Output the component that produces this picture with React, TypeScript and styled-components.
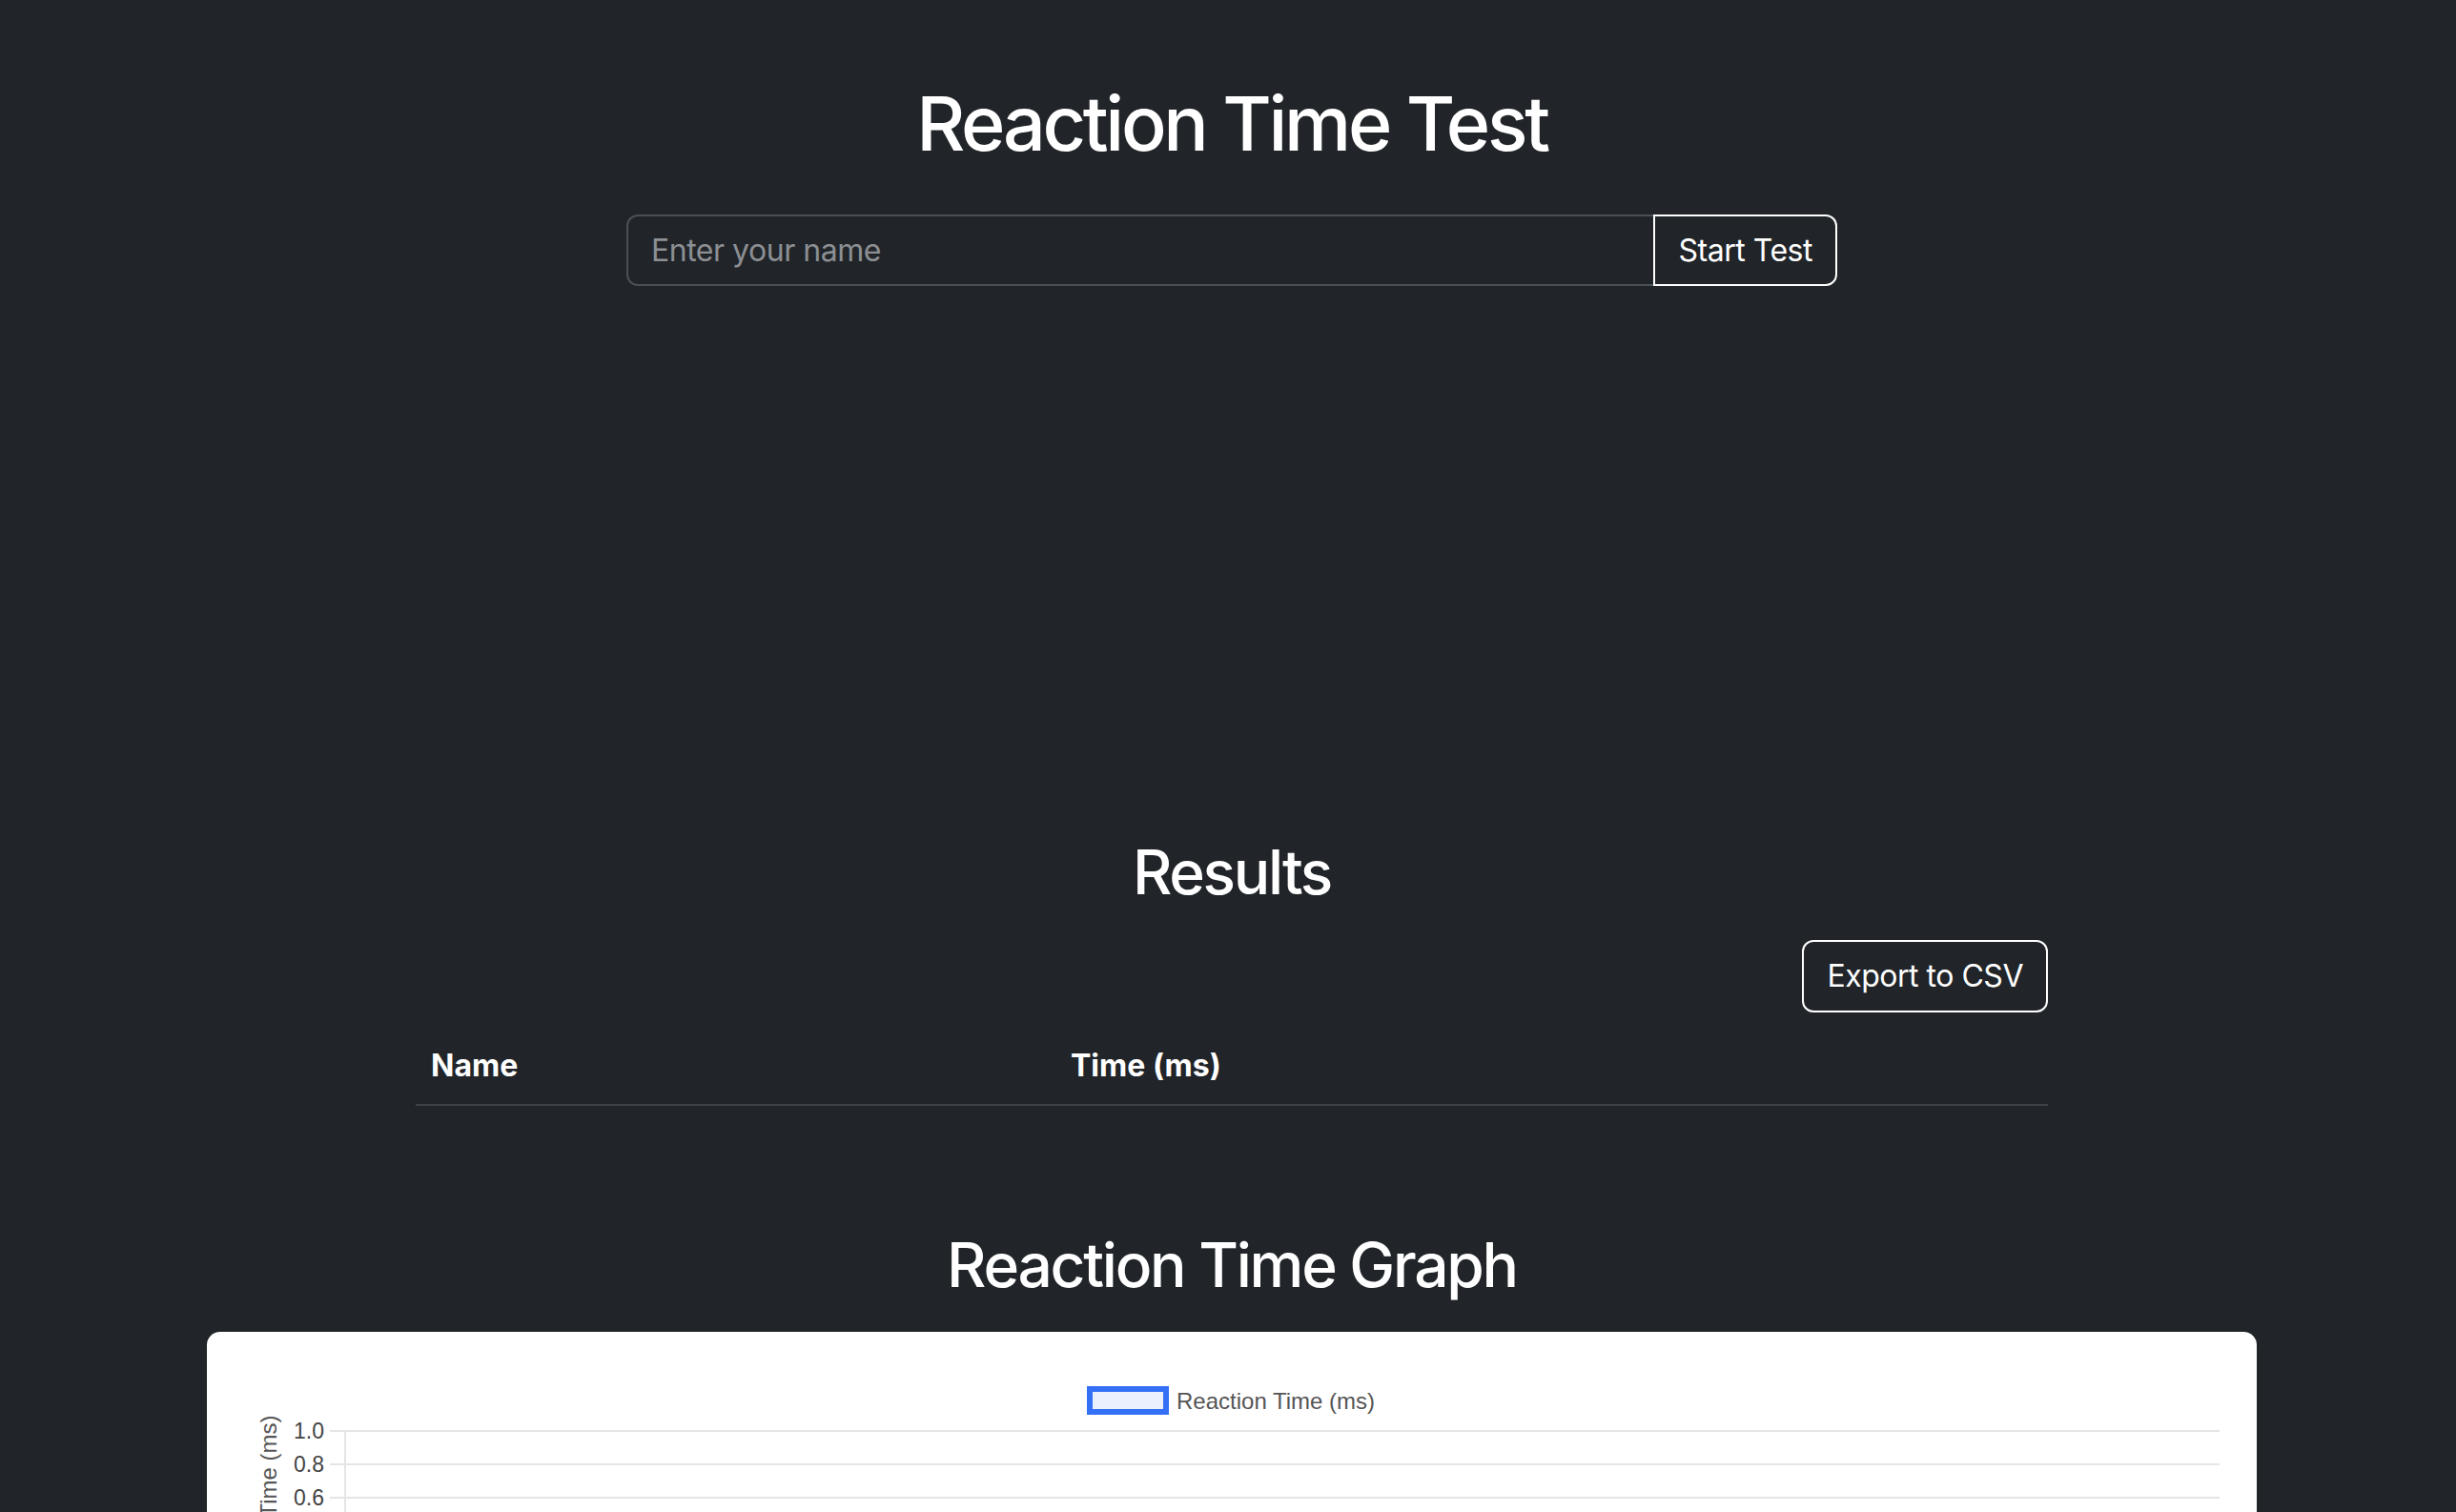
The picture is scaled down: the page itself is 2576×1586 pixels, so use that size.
import React, { useState } from "react";
import styled, { createGlobalStyle } from "styled-components";

const GlobalStyle = createGlobalStyle`
  *, *::before, *::after {
    box-sizing: border-box;
  }
  body {
    margin: 0;
    background-color: #212529;
    color: #ffffff;
    font-family: Inter, "Noto Sans", "Liberation Sans", sans-serif;
  }
`;

const Page = styled.div`
  display: flex;
  flex-direction: column;
  align-items: center;
  width: 100%;
  height: 100vh;
  overflow: hidden;
  padding-left: 8px;
`;

const Title = styled.h1`
  margin: 82px 0 48px;
  font-size: 79px;
  font-weight: 500;
  line-height: 1.2;
  letter-spacing: -0.042em;
  text-align: center;
`;

const InputGroup = styled.div`
  display: flex;
  width: 1270px;
  height: 75px;
  flex-shrink: 0;
`;

const NameInput = styled.input`
  flex: 1;
  height: 100%;
  padding: 0 24px;
  background: transparent;
  border: 2px solid #495057;
  border-right: none;
  border-radius: 12px 0 0 12px;
  color: #ffffff;
  font-family: inherit;
  font-size: 32px;
  letter-spacing: -0.015em;
  outline: none;

  &::placeholder {
    color: #8c8f93;
  }
`;

const OutlineButton = styled.button<{ $attached?: boolean }>`
  height: ${(p) => (p.$attached ? "100%" : "76px")};
  padding: 0 24px;
  background: transparent;
  border: 2px solid #ffffff;
  border-radius: ${(p) => (p.$attached ? "0 12px 12px 0" : "12px")};
  color: #ffffff;
  font-family: inherit;
  font-size: 32px;
  letter-spacing: -0.015em;
  cursor: pointer;
  flex-shrink: 0;
`;

const TestArea = styled.div`
  height: 577px;
  flex-shrink: 0;
`;

const Section = styled.section<{ $width: number }>`
  width: ${(p) => p.$width}px;
  flex-shrink: 0;
`;

const SectionTitle = styled.h2<{ $top?: number; $bottom?: number }>`
  margin: ${(p) => p.$top || 0}px 0 ${(p) => p.$bottom || 0}px;
  font-size: 64px;
  font-weight: 500;
  line-height: 1.2;
  letter-spacing: -0.035em;
  text-align: center;
`;

const Toolbar = styled.div`
  display: flex;
  justify-content: flex-end;
  margin-top: 32px;
`;

const Table = styled.table`
  width: 100%;
  margin-top: 16px;
  border-collapse: collapse;
`;

const HeadCell = styled.th<{ $width?: number }>`
  width: ${(p) => (p.$width ? `${p.$width}px` : "auto")};
  padding: 16px;
  text-align: left;
  font-size: 32px;
  font-weight: 700;
  line-height: 1.5;
  border-bottom: 2px solid #3d4246;
`;

const ChartCard = styled.div`
  width: 2150px;
  height: 640px;
  flex-shrink: 0;
  background: #ffffff;
  border-radius: 14px;
  overflow: hidden;
`;

const ChartSvg = styled.svg`
  display: block;
  font-family: "Liberation Sans", Arial, sans-serif;
`;

const ticks = ["1.0", "0.8", "0.6", "0.4", "0.2", "0.0"];
const gridTop = 104;
const gridStep = 35;

const ReactionChart = () => (
  <ChartSvg width="2150" height="640" viewBox="0 0 2150 640">
    <rect
      x="926"
      y="60"
      width="80"
      height="24"
      fill="rgba(51,112,246,0.1)"
      stroke="#3370f6"
      strokeWidth="6"
    />
    <text x="1017" y="81" fontSize="24" fill="#555">
      Reaction Time (ms)
    </text>
    <text
      x="0"
      y="0"
      fontSize="24"
      fill="#555"
      textAnchor="middle"
      transform={`translate(73 ${gridTop + gridStep * 2.5}) rotate(-90)`}
    >
      Reaction Time (ms)
    </text>
    {ticks.map((t, i) => {
      const y = gridTop + i * gridStep;
      return (
        <g key={t}>
          <line x1="129" x2="2111" y1={y} y2={y} stroke="#e5e5e5" strokeWidth="2" />
          <text x="123" y={y + 8} fontSize="23" fill="#444" textAnchor="end">
            {t}
          </text>
        </g>
      );
    })}
    <line
      x1="145"
      x2="145"
      y1={gridTop}
      y2={gridTop + gridStep * 5 + 16}
      stroke="#e5e5e5"
      strokeWidth="2"
    />
  </ChartSvg>
);

export default function App() {
  const [name, setName] = useState("");

  return (
    <>
      <GlobalStyle />
      <Page>
        <Title>Reaction Time Test</Title>
        <InputGroup>
          <NameInput
            placeholder="Enter your name"
            value={name}
            onChange={(e) => setName(e.target.value)}
          />
          <OutlineButton $attached>Start Test</OutlineButton>
        </InputGroup>
        <TestArea />
        <Section $width={1712}>
          <SectionTitle>Results</SectionTitle>
          <Toolbar>
            <OutlineButton>Export to CSV</OutlineButton>
          </Toolbar>
          <Table>
            <thead>
              <tr>
                <HeadCell $width={671}>Name</HeadCell>
                <HeadCell>Time (ms)</HeadCell>
              </tr>
            </thead>
            <tbody />
          </Table>
        </Section>
        <SectionTitle $top={129} $bottom={32}>
          Reaction Time Graph
        </SectionTitle>
        <ChartCard>
          <ReactionChart />
        </ChartCard>
      </Page>
    </>
  );
}
